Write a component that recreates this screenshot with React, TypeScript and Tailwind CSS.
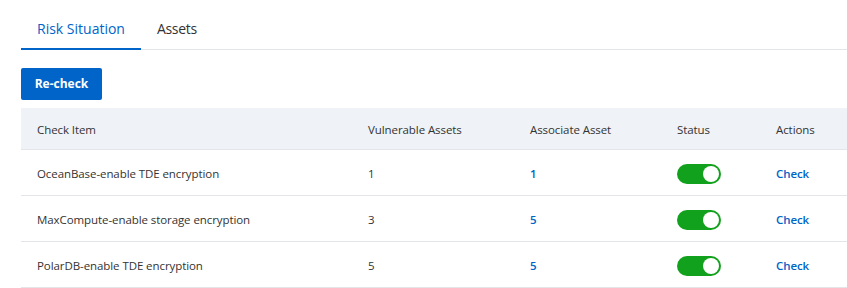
import { useState } from "react"

const rows = [
  { id: 1, item: "OceanBase-enable TDE encryption", vulnerable: 1, associate: 1 },
  { id: 2, item: "MaxCompute-enable storage encryption", vulnerable: 3, associate: 5 },
  { id: 3, item: "PolarDB-enable TDE encryption", vulnerable: 5, associate: 5 },
]

const cols = "grid grid-cols-[331px_162px_147px_99px_1fr]"

function Toggle({ on, onClick }: { on: boolean; onClick: () => void }) {
  return (
    <button
      onClick={onClick}
      className={`relative w-[44px] h-[20px] rounded-full transition-colors ${on ? "bg-[#12a11d]" : "bg-[#c8c8c8]"}`}
    >
      <span
        className={`absolute top-[2px] w-[16px] h-[16px] rounded-full bg-white transition-all ${on ? "left-[26px]" : "left-[2px]"}`}
      />
    </button>
  )
}

export default function App() {
  const [tab, setTab] = useState("risk")
  const [status, setStatus] = useState<Record<number, boolean>>({ 1: true, 2: true, 3: true })

  return (
    <div className="min-h-[288px] bg-white pl-[21px] text-[#333] font-['Open_Sans',sans-serif]">
      {/* Tabs */}
      <div className="flex border-b border-[#e3e5e8] pt-[19px]">
        <button
          onClick={() => setTab("risk")}
          className={`px-[16px] pb-[9px] text-[14px] leading-[20px] font-medium border-b-2 -mb-px ${
            tab === "risk" ? "border-[#0064c8] text-[#0064c8]" : "border-transparent text-[#333]"
          }`}
        >
          Risk Situation
        </button>
        <button
          onClick={() => setTab("assets")}
          className={`px-[16px] pb-[9px] text-[14px] leading-[20px] tracking-[-0.3px] border-b-2 -mb-px ${
            tab === "assets" ? "border-[#0064c8] text-[#0064c8]" : "border-transparent text-[#333]"
          }`}
        >
          Assets
        </button>
      </div>

      {/* Re-check */}
      <button className="mt-[18px] h-[32px] w-[81px] rounded-[2px] bg-[#0064c8] text-white text-[12px] font-bold">
        Re-check
      </button>

      {/* Table */}
      <div className="mt-[8px] text-[11.5px] tracking-[-0.08px]">
        <div className={`${cols} h-[42px] items-center pt-[2px] bg-[#eff2f6] border-b border-[#e3e5e8]`}>
          <div className="pl-[16px]">Check Item</div>
          <div className="pl-[16px]">Vulnerable Assets</div>
          <div className="pl-[16px]">Associate Asset</div>
          <div className="pl-[16px]">Status</div>
          <div className="pl-[16px]">Actions</div>
        </div>
        {rows.map((row) => (
          <div key={row.id} className={`${cols} h-[46px] items-center pt-[2px] border-b border-[#e3e5e8]`}>
            <div className="pl-[16px]">{row.item}</div>
            <div className="pl-[16px]">{row.vulnerable}</div>
            <div className="pl-[16px] font-semibold text-[#0064c8]">{row.associate}</div>
            <div className="pl-[16px] flex">
              <Toggle on={status[row.id]} onClick={() => setStatus({ ...status, [row.id]: !status[row.id] })} />
            </div>
            <div className="pl-[16px] font-semibold text-[#0064c8]">Check</div>
          </div>
        ))}
      </div>
    </div>
  )
}
